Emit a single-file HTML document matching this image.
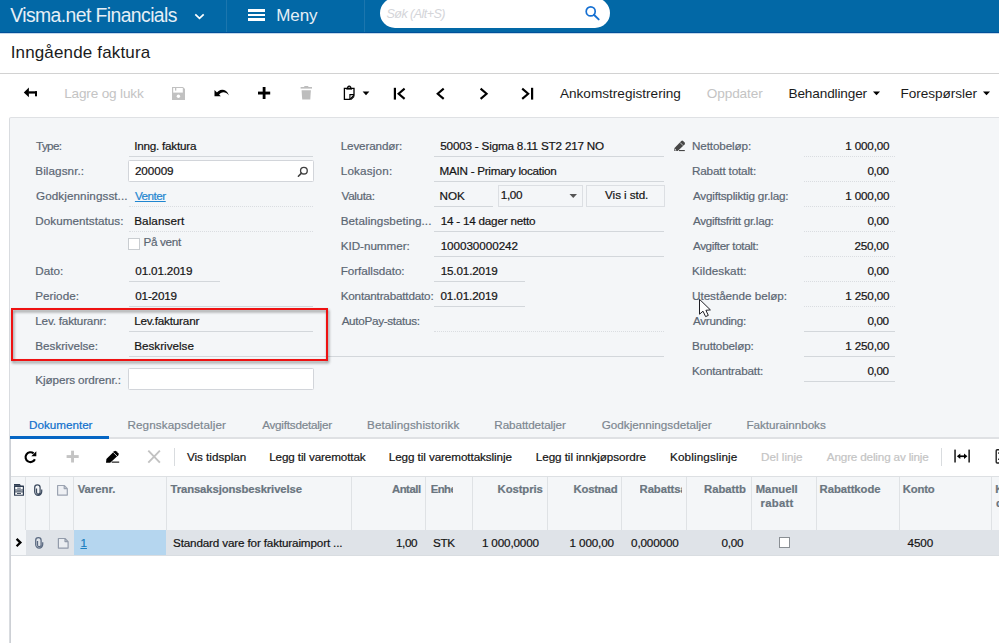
<!DOCTYPE html>
<html><head><meta charset="utf-8">
<style>
*{box-sizing:border-box;margin:0;padding:0}
html,body{width:999px;height:643px;overflow:hidden;background:#fff}
body{font-family:"Liberation Sans",sans-serif;font-size:12px;color:#1b1b1b;position:relative}
.a{position:absolute;white-space:nowrap}
.t{-webkit-text-stroke:0.2px currentColor}
.ul{height:1px;background:#d3d7db}
.dl{height:0;border-top:1px dotted #dadde1}
.box{background:#fff;border:1px solid #d2d5da;border-radius:1.5px}
</style></head><body>
<div class="a" style="left:0;top:0;width:999px;height:33px;background:#0268a6;border-bottom:1px solid #00509a"></div><div class="a" style="left:0;top:33px;width:999px;height:1px;background:#c3d9ea"></div>
<svg class="a" style="left:193px;top:11px" width="13" height="10" viewBox="193 11 13 10"><path d="M195.3 14.3 L199.5 18.4 L203.7 14.3" fill="none" stroke="#fff" stroke-width="1.7"/></svg>
<div class="a" style="left:226px;top:0;width:1px;height:32px;background:#1c76ae"></div>
<div class="a" style="left:364px;top:0;width:1px;height:32px;background:#1c76ae"></div>
<div class="a" style="left:248px;top:9px;width:17.4px;height:2.8px;background:#fff"></div>
<div class="a" style="left:248px;top:13.6px;width:17.4px;height:2.8px;background:#fff"></div>
<div class="a" style="left:248px;top:18.3px;width:17.4px;height:2.8px;background:#fff"></div>
<div class="a" style="left:380px;top:-2px;width:229.6px;height:30px;border-radius:15px;background:#fff"></div>
<svg class="a" style="left:584px;top:6px" width="17" height="16" viewBox="584 6 17 16"><circle cx="590.7" cy="11.4" r="4.5" fill="none" stroke="#1670d2" stroke-width="1.7"/><path d="M593.9 14.7 L598.7 19.4" stroke="#1670d2" stroke-width="1.9" stroke-linecap="round"/></svg>
<div class="a" style="left:0;top:73px;width:999px;height:1px;background:#d2d2d2"></div>
<svg class="a" style="left:0;top:80px" width="999" height="30" viewBox="0 80 999 30">
<path d="M23.8 92.5 L28.9 87.6 V97.3 Z" fill="#000"/><rect x="28.5" y="91.3" width="8.5" height="2.3" fill="#000"/><rect x="35" y="91.3" width="2" height="5" fill="#000"/>
<path d="M172 87 H183 L185 89 V100 H172 Z" fill="#c1c1c1"/><rect x="173.2" y="88" width="9.6" height="4.6" fill="#fff"/><rect x="175" y="88" width="1.3" height="2.6" fill="#c1c1c1"/><circle cx="178.4" cy="96.3" r="1.7" fill="#fff"/>
<path d="M214.5 90 L214.5 96.2 L220.8 96.2 Z" fill="#000"/><path d="M216 94.4 C218.5 88.6 226 87.8 229 95.4 C225.5 91 221.3 91.2 218.6 95.2 Z" fill="#000"/>
<rect x="262.7" y="87" width="2.8" height="12" fill="#000"/><rect x="258" y="91.6" width="12.2" height="2.9" fill="#000"/>
<rect x="300.6" y="87" width="11.4" height="1.6" fill="#bdbdbd"/><rect x="304.3" y="86" width="4" height="1.2" fill="#bdbdbd"/><path d="M301.6 90.2 H310.9 L310.3 99.6 H302.2 Z" fill="#bdbdbd"/>
<path d="M344.4 88.4 H354 V95.2 L349.9 99.4 H344.4 Z" fill="none" stroke="#000" stroke-width="1.3"/><path d="M349.9 99.4 V94.6 H354" fill="none" stroke="#000" stroke-width="1.1"/><path d="M350.2 99.6 L354.3 95.4 V97 L351.6 99.8 Z" fill="#000"/><rect x="346.3" y="87.9" width="5.8" height="1.7" fill="#000"/><path d="M347.7 88 V87.2 Q349.2 85 350.7 87.2 V88" fill="none" stroke="#000" stroke-width="1.2"/>
<path d="M362.6 91.4 H369.4 L366 95.2 Z" fill="#000"/>
<rect x="393.8" y="87.8" width="2.2" height="11.8" fill="#000"/><path d="M404.6 88.6 L398.6 93.7 L404.6 98.9" fill="none" stroke="#000" stroke-width="2.1"/>
<path d="M443.7 88.6 L437.7 93.7 L443.7 98.9" fill="none" stroke="#000" stroke-width="2.1"/>
<path d="M480.6 88.6 L486.6 93.7 L480.6 98.9" fill="none" stroke="#000" stroke-width="2.1"/>
<path d="M522.2 88.6 L528.2 93.7 L522.2 98.9" fill="none" stroke="#000" stroke-width="2.1"/><rect x="531" y="87.8" width="2.2" height="11.8" fill="#000"/>
<path d="M873 91.4 H880 L876.5 95.2 Z" fill="#000"/><path d="M983 91.4 H990 L986.5 95.2 Z" fill="#000"/>
</svg>
<div class="a" style="left:9.3px;top:117px;width:1000px;height:530px;background:#f4f6f8;border:1px solid #d9dce0;border-top:1.6px solid #dfe1e4;border-radius:2px 0 0 0"></div>
<div class="a ul" style="left:129px;top:156px;width:184px"></div>
<div class="a box" style="left:128.2px;top:160px;width:185.5px;height:22px"></div>
<svg class="a" style="left:294px;top:163px" width="16" height="16" viewBox="294 163 16 16"><circle cx="303.9" cy="170.7" r="3.35" fill="none" stroke="#404040" stroke-width="1.35"/><path d="M301.5 173.1 L298.4 176.2" stroke="#404040" stroke-width="1.6" stroke-linecap="round"/></svg>
<div class="a dl" style="left:129px;top:206px;width:184px"></div>
<div class="a dl" style="left:129px;top:231px;width:184px"></div>
<div class="a" style="left:128px;top:238px;width:12px;height:12px;background:#fff;border:1px solid #c9cdd1"></div>
<div class="a ul" style="left:129px;top:281px;width:91px"></div>
<div class="a ul" style="left:129px;top:306px;width:184px"></div>
<div class="a ul" style="left:129px;top:331px;width:184px"></div>
<div class="a ul" style="left:129px;top:356px;width:535px"></div>
<div class="a box" style="left:128.2px;top:368px;width:185.5px;height:22px"></div>
<div class="a" style="left:11.2px;top:308.3px;width:316.4px;height:53.2px;border:2.1px solid #ee1212;filter:drop-shadow(1.5px 2px 1.4px rgba(0,0,0,.45))"></div>
<div class="a ul" style="left:434px;top:156px;width:230px"></div>
<div class="a ul" style="left:434px;top:181px;width:230px"></div>
<div class="a ul" style="left:434px;top:206px;width:59px"></div>
<div class="a" style="left:498px;top:185px;width:85px;height:22px;border:1px solid #dcdfe3"></div>
<svg class="a" style="left:569px;top:193px" width="9" height="6" viewBox="0 0 9 6"><path d="M0.5 1 H8 L4.25 5 Z" fill="#555"/></svg>
<div class="a" style="left:586px;top:185px;width:79px;height:22px;border:1px solid #dcdfe3"></div>
<div class="a ul" style="left:434px;top:231px;width:230px"></div>
<div class="a ul" style="left:434px;top:256px;width:230px"></div>
<div class="a ul" style="left:434px;top:281px;width:91px"></div>
<div class="a ul" style="left:434px;top:306px;width:91px"></div>
<div class="a dl" style="left:434px;top:331px;width:230px"></div>
<div class="a dl" style="left:804px;top:156px;width:91px"></div>
<div class="a dl" style="left:804px;top:181px;width:91px"></div>
<div class="a dl" style="left:804px;top:206px;width:91px"></div>
<div class="a dl" style="left:804px;top:231px;width:91px"></div>
<div class="a dl" style="left:804px;top:256px;width:91px"></div>
<div class="a dl" style="left:804px;top:281px;width:91px"></div>
<div class="a dl" style="left:804px;top:306px;width:91px"></div>
<div class="a ul" style="left:804px;top:331px;width:91px"></div>
<div class="a ul" style="left:804px;top:356px;width:91px"></div>
<div class="a ul" style="left:804px;top:381px;width:91px"></div>
<svg class="a" style="left:670px;top:137px" width="18" height="17" viewBox="670 137 18 17"><path d="M674.2 150.9 L674.5 147.9 L681.3 141 Q682.2 140.2 683.1 141 L684.6 142.6 Q685.4 143.5 684.6 144.4 L677.7 151 Z" fill="#474747"/><path d="M680.1 142.5 L683.2 145.7" stroke="#f4f6f8" stroke-width="0.7"/><path d="M675 148.8 L676.6 150.4 L674.9 150.5 Z" fill="#f4f6f8"/><rect x="679" y="150" width="5.8" height="1.1" fill="#474747"/></svg>
<div class="a" style="left:11px;top:439px;width:988px;height:204px;background:#fff"></div>
<div class="a" style="left:11px;top:437px;width:988px;height:2px;background:#dfe1e4"></div>
<div class="a" style="left:10.3px;top:436px;width:98.7px;height:3px;background:#0566c4"></div>
<svg class="a" style="left:0;top:440px" width="999" height="36" viewBox="0 440 999 36">
<path d="M33.6 453.4 A4.9 4.9 0 1 0 34.9 459.3" fill="none" stroke="#000" stroke-width="2.1"/><path d="M31.3 456.3 H36.3 V451.3 Z" fill="#000"/>
<rect x="71.1" y="450.7" width="2.9" height="11.8" fill="#c4c4c4"/><rect x="66.6" y="455.1" width="12.1" height="2.9" fill="#c4c4c4"/>
<path d="M106 462.7 L106.4 459.1 L114.2 451.2 Q115.2 450.3 116.2 451.2 L118.3 453.3 Q119.2 454.3 118.3 455.3 L110.2 462.7 Z" fill="#000"/><path d="M113.3 452.4 L117.1 456.2" stroke="#fff" stroke-width="0.8"/><rect x="111.7" y="461.5" width="7.5" height="1.3" fill="#333"/>
<path d="M148.3 450.6 L159.9 462.6 M159.9 450.6 L148.3 462.6" stroke="#c2c2c2" stroke-width="1.9" fill="none"/>
<rect x="174" y="448" width="1" height="18" fill="#d9dcdf"/><rect x="941" y="448" width="1" height="18" fill="#d9dcdf"/>
<rect x="954.2" y="449.6" width="1.7" height="12.9" fill="#333"/><rect x="968.3" y="449.6" width="1.7" height="12.9" fill="#333"/><rect x="959" y="455.4" width="6.4" height="1.7" fill="#000"/><path d="M956.9 456.2 L960.3 453.4 V459 Z" fill="#000"/><path d="M967.4 456.2 L964 453.4 V459 Z" fill="#000"/>
<rect x="996.2" y="449.8" width="8" height="13.2" rx="1" fill="none" stroke="#222" stroke-width="1.4"/><rect x="998" y="452.4" width="2" height="1.3" fill="#222"/><rect x="998" y="458.6" width="2" height="1.3" fill="#222"/>
</svg>
<div class="a" style="left:11px;top:476px;width:988px;height:54px;background:#f4f6f8;border-top:1px solid #dde0e3"></div>
<div class="a" style="left:11px;top:529.5px;width:988px;height:25.5px;background:#dfe3e8"></div>
<div class="a" style="left:11px;top:529.5px;width:14.5px;height:25.5px;background:#f4f6f8"></div>
<div class="a" style="left:74px;top:529.5px;width:92.2px;height:25.5px;background:#b5d6ef"></div>
<div class="a" style="left:11px;top:555px;width:988px;height:1px;background:#d9dde1"></div>
<div class="a" style="left:25px;top:477px;width:1px;height:53px;background:#dfe2e5"></div>
<div class="a" style="left:49px;top:477px;width:1px;height:53px;background:#dfe2e5"></div>
<div class="a" style="left:73px;top:477px;width:1px;height:53px;background:#dfe2e5"></div>
<div class="a" style="left:166px;top:477px;width:1px;height:53px;background:#dfe2e5"></div>
<div class="a" style="left:351px;top:477px;width:1px;height:53px;background:#dfe2e5"></div>
<div class="a" style="left:425px;top:477px;width:1px;height:53px;background:#dfe2e5"></div>
<div class="a" style="left:472px;top:477px;width:1px;height:53px;background:#dfe2e5"></div>
<div class="a" style="left:547px;top:477px;width:1px;height:53px;background:#dfe2e5"></div>
<div class="a" style="left:621px;top:477px;width:1px;height:53px;background:#dfe2e5"></div>
<div class="a" style="left:686px;top:477px;width:1px;height:53px;background:#dfe2e5"></div>
<div class="a" style="left:751px;top:477px;width:1px;height:53px;background:#dfe2e5"></div>
<div class="a" style="left:816px;top:477px;width:1px;height:53px;background:#dfe2e5"></div>
<div class="a" style="left:899px;top:477px;width:1px;height:53px;background:#dfe2e5"></div>
<div class="a" style="left:991px;top:477px;width:1px;height:53px;background:#dfe2e5"></div>
<svg class="a" style="left:11px;top:478px" width="62" height="24" viewBox="11 478 62 24"><path d="M14 485.8 V483.9 H19.8 L21.2 485.8 Z" fill="#2f3d52"/><rect x="14" y="485.4" width="10" height="10.4" rx="0.6" fill="#2f3d52"/><rect x="15.2" y="487" width="7.6" height="2.5" fill="#fff"/><rect x="17.2" y="487.5" width="3.6" height="1.5" fill="#8d96a3"/><rect x="15.2" y="490.5" width="7.6" height="0.9" fill="#fff"/><rect x="17.2" y="490.5" width="3.6" height="0.9" fill="#5d6878"/><rect x="15.2" y="492.4" width="7.6" height="2.3" fill="#fff"/><rect x="17" y="493.1" width="4" height="0.9" fill="#2f3d52"/><path transform="translate(0,0)" d="M41.7 489.6 V491.8 A3.5 3.5 0 0 1 34.7 491.8 V487.6 A2.7 2.7 0 0 1 40.1 487.6 V492.2 A1.8 1.8 0 0 1 36.5 492.2 V488.4" fill="none" stroke="#3d4b5f" stroke-width="1.25"/><path transform="translate(0,0)" d="M57.6 485.5 H64.2 L67.3 488.6 V495.1 H57.6 Z M64.2 485.5 V488.6 H67.3" fill="#eef0f4" stroke="#9ba3b1" stroke-width="1.2" stroke-linejoin="round"/></svg>
<svg class="a" style="left:11px;top:532px" width="62" height="22" viewBox="11 532 62 22"><path d="M16.6 538.9 L20.4 542.6 L16.6 546.3" fill="none" stroke="#000" stroke-width="2.3"/><path transform="translate(1,52.7)" d="M41.7 489.6 V491.8 A3.5 3.5 0 0 1 34.7 491.8 V487.6 A2.7 2.7 0 0 1 40.1 487.6 V492.2 A1.8 1.8 0 0 1 36.5 492.2 V488.4" fill="none" stroke="#5a6980" stroke-width="1.25"/><path transform="translate(0.8,53)" d="M57.6 485.5 H64.2 L67.3 488.6 V495.1 H57.6 Z M64.2 485.5 V488.6 H67.3" fill="#eaedf1" stroke="#929baa" stroke-width="1.2" stroke-linejoin="round"/></svg>
<div class="a" style="left:779px;top:537px;width:11px;height:11px;background:#fff;border:1px solid #8a8f94"></div>
<div class="a" style="left:10px;top:439px;width:1px;height:204px;background:#cdd0d5"></div>
<div class="a" style="left:10.23px;top:2.9px;font-size:19.4px;line-height:24px;color:#e6eff6;letter-spacing:-0.595px;">Visma.net Financials</div>
<div class="a" style="left:276.26px;top:3.8px;font-size:17px;line-height:24px;color:#e6eff6;letter-spacing:-0.101px;">Meny</div>
<div class="a" style="left:386.41px;top:7.3px;font-size:12.6px;line-height:14px;color:#d4d5d9;font-style:italic;letter-spacing:-0.561px;">Søk (Alt+S)</div>
<div class="a" style="left:10.66px;top:43px;font-size:17px;line-height:20px;color:#1b1b1b;letter-spacing:0.153px;">Inngående faktura</div>
<div class="a" style="left:64.20px;top:85.5px;font-size:13.6px;line-height:16px;color:#c4c4c4;letter-spacing:-0.175px;">Lagre og lukk</div>
<div class="a" style="left:559.93px;top:85.5px;font-size:13.6px;line-height:16px;color:#1b1b1b;">Ankomstregistrering</div>
<div class="a" style="left:706.70px;top:85.5px;font-size:13.6px;line-height:16px;color:#c4c4c4;letter-spacing:-0.084px;">Oppdater</div>
<div class="a" style="left:788.50px;top:85.5px;font-size:13.6px;line-height:16px;color:#1b1b1b;letter-spacing:-0.136px;">Behandlinger</div>
<div class="a" style="left:900.50px;top:85.5px;font-size:13.6px;line-height:16px;color:#1b1b1b;letter-spacing:-0.045px;">Forespørsler</div>
<div class="a t" style="left:36.12px;top:139px;font-size:11.7px;line-height:14px;color:#5b6673;letter-spacing:-0.686px;">Type:</div>
<div class="a t" style="left:134.17px;top:139px;font-size:11.7px;line-height:14px;color:#141414;letter-spacing:-0.228px;">Inng. faktura</div>
<div class="a t" style="left:35.30px;top:164px;font-size:11.7px;line-height:14px;color:#5b6673;letter-spacing:0.078px;">Bilagsnr.:</div>
<div class="a t" style="left:134.94px;top:164px;font-size:11.7px;line-height:14px;color:#141414;letter-spacing:-0.071px;">200009</div>
<div class="a t" style="left:36.02px;top:189px;font-size:11.7px;line-height:14px;color:#5b6673;letter-spacing:0.074px;">Godkjenningsst...</div>
<div class="a t" style="left:134.91px;top:189px;font-size:11.7px;line-height:14px;color:#141414;letter-spacing:-0.494px;"><span style="color:#1f86d0;text-decoration:underline">Venter</span></div>
<div class="a t" style="left:35.30px;top:214px;font-size:11.7px;line-height:14px;color:#5b6673;letter-spacing:0.032px;">Dokumentstatus:</div>
<div class="a t" style="left:134.20px;top:214px;font-size:11.7px;line-height:14px;color:#141414;letter-spacing:0.083px;">Balansert</div>
<div class="a t" style="left:143.60px;top:235px;font-size:11.7px;line-height:14px;color:#5b6673;letter-spacing:-0.342px;">På vent</div>
<div class="a t" style="left:35.30px;top:264px;font-size:11.7px;line-height:14px;color:#5b6673;letter-spacing:-0.025px;">Dato:</div>
<div class="a t" style="left:135.30px;top:264px;font-size:11.7px;line-height:14px;color:#141414;letter-spacing:-0.155px;">01.01.2019</div>
<div class="a t" style="left:35.30px;top:289px;font-size:11.7px;line-height:14px;color:#5b6673;letter-spacing:0.011px;">Periode:</div>
<div class="a t" style="left:135.30px;top:289px;font-size:11.7px;line-height:14px;color:#141414;letter-spacing:-0.203px;">01-2019</div>
<div class="a t" style="left:35.30px;top:314px;font-size:11.7px;line-height:14px;color:#5b6673;letter-spacing:-0.196px;">Lev. fakturanr:</div>
<div class="a t" style="left:134.20px;top:314px;font-size:11.7px;line-height:14px;color:#141414;letter-spacing:-0.181px;">Lev.fakturanr</div>
<div class="a t" style="left:35.30px;top:339px;font-size:11.7px;line-height:14px;color:#5b6673;letter-spacing:-0.018px;">Beskrivelse:</div>
<div class="a t" style="left:134.20px;top:339px;font-size:11.7px;line-height:14px;color:#141414;">Beskrivelse</div>
<div class="a t" style="left:35.30px;top:373px;font-size:11.7px;line-height:14px;color:#5b6673;letter-spacing:-0.087px;">Kjøpers ordrenr.:</div>
<div class="a t" style="left:340.70px;top:139px;font-size:11.7px;line-height:14px;color:#5b6673;letter-spacing:-0.140px;">Leverandør:</div>
<div class="a t" style="left:440.30px;top:139px;font-size:11.7px;line-height:14px;color:#141414;letter-spacing:-0.195px;">50003 - Sigma 8.11 ST2 217 NO</div>
<div class="a t" style="left:340.70px;top:164px;font-size:11.7px;line-height:14px;color:#5b6673;letter-spacing:0.188px;">Lokasjon:</div>
<div class="a t" style="left:439.60px;top:164px;font-size:11.7px;line-height:14px;color:#141414;letter-spacing:-0.280px;">MAIN - Primary location</div>
<div class="a t" style="left:341.62px;top:189px;font-size:11.7px;line-height:14px;color:#5b6673;letter-spacing:-0.373px;">Valuta:</div>
<div class="a t" style="left:439.60px;top:189px;font-size:11.7px;line-height:14px;color:#141414;letter-spacing:-0.035px;">NOK</div>
<div class="a t" style="left:500.74px;top:188px;font-size:11.7px;line-height:14px;color:#141414;letter-spacing:-0.355px;">1,00</div>
<div class="a t" style="left:605.12px;top:188px;font-size:11.7px;line-height:14px;color:#141414;letter-spacing:-0.079px;">Vis i std.</div>
<div class="a t" style="left:340.70px;top:214px;font-size:11.7px;line-height:14px;color:#5b6673;letter-spacing:0.062px;">Betalingsbeting...</div>
<div class="a t" style="left:440.64px;top:214px;font-size:11.7px;line-height:14px;color:#141414;letter-spacing:-0.214px;">14 - 14 dager netto</div>
<div class="a t" style="left:340.70px;top:239px;font-size:11.7px;line-height:14px;color:#5b6673;letter-spacing:-0.032px;">KID-nummer:</div>
<div class="a t" style="left:440.64px;top:239px;font-size:11.7px;line-height:14px;color:#141414;letter-spacing:-0.052px;">100030000242</div>
<div class="a t" style="left:340.70px;top:264px;font-size:11.7px;line-height:14px;color:#5b6673;letter-spacing:-0.034px;">Forfallsdato:</div>
<div class="a t" style="left:440.64px;top:264px;font-size:11.7px;line-height:14px;color:#141414;letter-spacing:-0.149px;">15.01.2019</div>
<div class="a t" style="left:340.70px;top:289px;font-size:11.7px;line-height:14px;color:#5b6673;letter-spacing:-0.189px;">Kontantrabattdato:</div>
<div class="a t" style="left:440.40px;top:289px;font-size:11.7px;line-height:14px;color:#141414;letter-spacing:-0.122px;">01.01.2019</div>
<div class="a t" style="left:341.63px;top:314px;font-size:11.7px;line-height:14px;color:#5b6673;letter-spacing:-0.297px;">AutoPay-status:</div>
<div class="a t" style="left:692.00px;top:139px;font-size:11.7px;line-height:14px;color:#5b6673;letter-spacing:-0.122px;">Nettobeløp:</div>
<div class="a t" style="left:845.34px;top:139px;font-size:11.7px;line-height:14px;color:#141414;letter-spacing:-0.189px;">1 000,00</div>
<div class="a t" style="left:692.00px;top:164px;font-size:11.7px;line-height:14px;color:#5b6673;letter-spacing:-0.162px;">Rabatt totalt:</div>
<div class="a t" style="left:867.50px;top:164px;font-size:11.7px;line-height:14px;color:#141414;letter-spacing:-0.408px;">0,00</div>
<div class="a t" style="left:692.93px;top:189px;font-size:11.7px;line-height:14px;color:#5b6673;letter-spacing:-0.204px;">Avgiftspliktig gr.lag:</div>
<div class="a t" style="left:845.34px;top:189px;font-size:11.7px;line-height:14px;color:#141414;letter-spacing:-0.189px;">1 000,00</div>
<div class="a t" style="left:692.93px;top:214px;font-size:11.7px;line-height:14px;color:#5b6673;letter-spacing:-0.276px;">Avgiftsfritt gr.lag:</div>
<div class="a t" style="left:867.50px;top:214px;font-size:11.7px;line-height:14px;color:#141414;letter-spacing:-0.408px;">0,00</div>
<div class="a t" style="left:692.93px;top:239px;font-size:11.7px;line-height:14px;color:#5b6673;letter-spacing:-0.369px;">Avgifter totalt:</div>
<div class="a t" style="left:854.44px;top:239px;font-size:11.7px;line-height:14px;color:#141414;letter-spacing:-0.232px;">250,00</div>
<div class="a t" style="left:692.00px;top:264px;font-size:11.7px;line-height:14px;color:#5b6673;letter-spacing:0.060px;">Kildeskatt:</div>
<div class="a t" style="left:867.50px;top:264px;font-size:11.7px;line-height:14px;color:#141414;letter-spacing:-0.408px;">0,00</div>
<div class="a t" style="left:692.00px;top:289px;font-size:11.7px;line-height:14px;color:#5b6673;letter-spacing:-0.026px;">Utestående beløp:</div>
<div class="a t" style="left:845.34px;top:289px;font-size:11.7px;line-height:14px;color:#141414;letter-spacing:-0.189px;">1 250,00</div>
<div class="a t" style="left:692.93px;top:314px;font-size:11.7px;line-height:14px;color:#5b6673;letter-spacing:-0.253px;">Avrunding:</div>
<div class="a t" style="left:867.50px;top:314px;font-size:11.7px;line-height:14px;color:#141414;letter-spacing:-0.408px;">0,00</div>
<div class="a t" style="left:692.00px;top:339px;font-size:11.7px;line-height:14px;color:#5b6673;letter-spacing:-0.168px;">Bruttobeløp:</div>
<div class="a t" style="left:845.34px;top:339px;font-size:11.7px;line-height:14px;color:#141414;letter-spacing:-0.189px;">1 250,00</div>
<div class="a t" style="left:692.00px;top:364px;font-size:11.7px;line-height:14px;color:#5b6673;letter-spacing:-0.171px;">Kontantrabatt:</div>
<div class="a t" style="left:867.50px;top:364px;font-size:11.7px;line-height:14px;color:#141414;letter-spacing:-0.408px;">0,00</div>
<div class="a t" style="left:29.00px;top:418px;font-size:11.7px;line-height:14px;color:#0f6fcc;letter-spacing:-0.017px;">Dokumenter</div>
<div class="a t" style="left:127.40px;top:418px;font-size:11.7px;line-height:14px;color:#7d8790;letter-spacing:0.109px;">Regnskapsdetaljer</div>
<div class="a t" style="left:262.13px;top:418px;font-size:11.7px;line-height:14px;color:#7d8790;letter-spacing:-0.226px;">Avgiftsdetaljer</div>
<div class="a t" style="left:367.00px;top:418px;font-size:11.7px;line-height:14px;color:#7d8790;letter-spacing:0.080px;">Betalingshistorikk</div>
<div class="a t" style="left:494.30px;top:418px;font-size:11.7px;line-height:14px;color:#7d8790;letter-spacing:-0.089px;">Rabattdetaljer</div>
<div class="a t" style="left:601.72px;top:418px;font-size:11.7px;line-height:14px;color:#7d8790;">Godkjenningsdetaljer</div>
<div class="a t" style="left:746.50px;top:418px;font-size:11.7px;line-height:14px;color:#7d8790;letter-spacing:-0.052px;">Fakturainnboks</div>
<div class="a t" style="left:186.91px;top:450px;font-size:11.7px;line-height:14px;color:#141414;letter-spacing:-0.015px;">Vis tidsplan</div>
<div class="a t" style="left:269.20px;top:450px;font-size:11.7px;line-height:14px;color:#141414;letter-spacing:-0.130px;">Legg til varemottak</div>
<div class="a t" style="left:388.80px;top:450px;font-size:11.7px;line-height:14px;color:#141414;letter-spacing:-0.092px;">Legg til varemottakslinje</div>
<div class="a t" style="left:535.80px;top:450px;font-size:11.7px;line-height:14px;color:#141414;letter-spacing:-0.072px;">Legg til innkjøpsordre</div>
<div class="a t" style="left:670.00px;top:450px;font-size:11.7px;line-height:14px;color:#141414;letter-spacing:0.142px;">Koblingslinje</div>
<div class="a t" style="left:761.00px;top:450px;font-size:11.7px;line-height:14px;color:#c4c4c4;">Del linje</div>
<div class="a t" style="left:826.83px;top:450px;font-size:11.7px;line-height:14px;color:#c4c4c4;letter-spacing:-0.165px;">Angre deling av linje</div>
<div class="a t" style="left:77.73px;top:482px;font-size:11.3px;line-height:14px;color:#6a757f;font-weight:bold;letter-spacing:-0.021px;">Varenr.</div>
<div class="a t" style="left:170.50px;top:482px;font-size:11.3px;line-height:14px;color:#6a757f;font-weight:bold;letter-spacing:-0.103px;">Transaksjonsbeskrivelse</div>
<div class="a t" style="left:391.92px;top:482px;font-size:11.3px;line-height:14px;color:#6a757f;font-weight:bold;letter-spacing:-0.429px;">Antall</div>
<div class="a t" style="left:430.80px;top:482px;font-size:11.3px;line-height:14px;color:#6a757f;font-weight:bold;letter-spacing:-0.575px;width:22px;overflow:hidden">Enhet</div>
<div class="a t" style="left:497.60px;top:482px;font-size:11.3px;line-height:14px;color:#6a757f;font-weight:bold;letter-spacing:-0.089px;">Kostpris</div>
<div class="a t" style="left:573.50px;top:482px;font-size:11.3px;line-height:14px;color:#6a757f;font-weight:bold;letter-spacing:-0.184px;">Kostnad</div>
<div class="a t" style="left:639.60px;top:482px;font-size:11.3px;line-height:14px;color:#6a757f;font-weight:bold;letter-spacing:-0.081px;width:42.5px;overflow:hidden">Rabattsats</div>
<div class="a t" style="left:704.00px;top:482px;font-size:11.3px;line-height:14px;color:#6a757f;font-weight:bold;letter-spacing:-0.014px;width:42px;overflow:hidden">Rabattbeløp</div>
<div class="a t" style="left:755.70px;top:482px;font-size:11.3px;line-height:14px;color:#6a757f;font-weight:bold;">Manuell</div>
<div class="a t" style="left:760.50px;top:496px;font-size:11.3px;line-height:14px;color:#6a757f;font-weight:bold;letter-spacing:0.300px;">rabatt</div>
<div class="a t" style="left:819.60px;top:482px;font-size:11.3px;line-height:14px;color:#6a757f;font-weight:bold;letter-spacing:-0.067px;">Rabattkode</div>
<div class="a t" style="left:902.70px;top:482px;font-size:11.3px;line-height:14px;color:#6a757f;font-weight:bold;letter-spacing:-0.150px;">Konto</div>
<div class="a t" style="left:995.30px;top:482px;font-size:11.3px;line-height:14px;color:#6a757f;font-weight:bold;">K</div>
<div class="a t" style="left:996.07px;top:496px;font-size:11.3px;line-height:14px;color:#6a757f;font-weight:bold;">d</div>
<div class="a t" style="left:80.44px;top:535.6px;font-size:11.7px;line-height:14px;color:#141414;"><span style="color:#1a7fc1;text-decoration:underline">1</span></div>
<div class="a t" style="left:173.00px;top:535.6px;font-size:11.7px;line-height:14px;color:#141414;letter-spacing:-0.154px;">Standard vare for fakturaimport ...</div>
<div class="a t" style="left:395.94px;top:535.6px;font-size:11.7px;line-height:14px;color:#141414;letter-spacing:-0.388px;">1,00</div>
<div class="a t" style="left:433.00px;top:535.6px;font-size:11.7px;line-height:14px;color:#141414;letter-spacing:-0.319px;">STK</div>
<div class="a t" style="left:481.94px;top:535.6px;font-size:11.7px;line-height:14px;color:#141414;letter-spacing:-0.158px;">1 000,0000</div>
<div class="a t" style="left:569.54px;top:535.6px;font-size:11.7px;line-height:14px;color:#141414;letter-spacing:-0.132px;">1 000,00</div>
<div class="a t" style="left:631.10px;top:535.6px;font-size:11.7px;line-height:14px;color:#141414;letter-spacing:-0.160px;">0,000000</div>
<div class="a t" style="left:721.50px;top:535.6px;font-size:11.7px;line-height:14px;color:#141414;letter-spacing:-0.274px;">0,00</div>
<div class="a t" style="left:907.41px;top:535.6px;font-size:11.7px;line-height:14px;color:#141414;letter-spacing:-0.027px;">4500</div>
<svg class="a" style="left:695px;top:295px" width="20" height="26" viewBox="695 295 20 26"><path d="M699.5 299.3 L699.5 314.2 L703 311.2 L705.6 316.6 L708.3 315.4 L705.9 310.3 L710.4 309.9 Z" fill="#fff" stroke="#1e1e24" stroke-width="1" stroke-linejoin="miter"/></svg>
</body></html>
